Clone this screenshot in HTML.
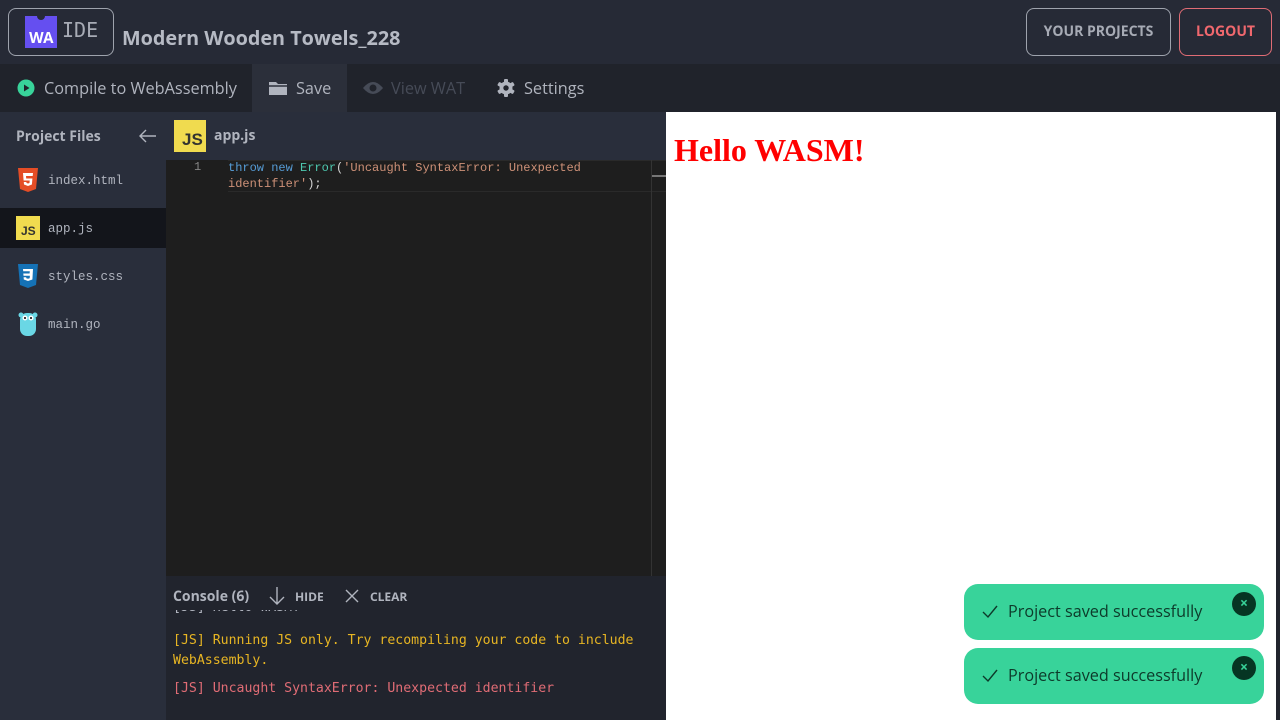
<!DOCTYPE html>
<html><head><meta charset="utf-8"><style>
*{margin:0;padding:0;box-sizing:border-box}
body{width:1280px;height:720px;overflow:hidden;background:#21242d;font-family:"Open Sans","Liberation Sans",sans-serif;position:relative}
.hdr{position:absolute;left:0;top:0;width:1280px;height:64px;background:#262a36}
.logo{position:absolute;left:8px;top:8px;width:106px;height:48px;border:1px solid #9ea3ad;border-radius:8px}
.wa{position:absolute;left:16px;top:7px;width:32px;height:32px;background:#654ff0;color:#fff;font-weight:bold;font-size:15px;line-height:14px;padding-top:15px;text-align:center;letter-spacing:-0.5px}
.wa:before{content:"";position:absolute;left:12px;top:-4px;width:8px;height:8px;border-radius:50%;background:#262a36}
.ide{position:absolute;left:53px;top:9px;color:#a7abb5;font-family:"DejaVu Sans Mono","Liberation Mono",monospace;font-size:20px;letter-spacing:0px}
.title{position:absolute;left:122px;top:24px;color:#b6bac4;font-weight:bold;font-size:19.8px}
.btn{position:absolute;top:8px;height:48px;border-radius:8px;font-weight:bold;font-size:14px;line-height:46px;text-align:center}
.tb{position:absolute;left:0;top:64px;width:1280px;height:48px;background:#20232b}
.ti{position:absolute;top:0;height:48px;line-height:48px;font-size:16.3px;color:#b0b4be}
.side{position:absolute;left:0;top:112px;width:166px;height:608px;background:#292e3b}
.f{position:absolute;left:0;width:166px;height:40px}
.f span{position:absolute;left:48px;top:14px;font-family:"Liberation Mono",monospace;font-size:12.5px;color:#b0b4be}
.ed{position:absolute;left:166px;top:112px;width:500px;height:464px;background:#1e1e1e}
.edh{position:absolute;left:166px;top:112px;width:500px;height:48px;background:#292e3b}
.code{font-family:"Liberation Mono",monospace;font-size:12px;position:absolute}
.con{position:absolute;left:166px;top:576px;width:500px;height:144px;background:#21242d}
.pre{position:absolute;left:666px;top:112px;width:610px;height:608px;background:#fff}
.toast{position:absolute;left:964px;width:300px;height:56px;background:#38d39a;border-radius:14px}
.toast .t{position:absolute;left:44px;top:16px;font-size:16.2px;color:#0d3a2a}
.toast .x{position:absolute;right:8px;top:8px;width:24px;height:24px;border-radius:50%;background:#063523;color:#38d39a;font-size:14px;font-weight:bold;text-align:center;line-height:24px}
</style></head><body>
<div class="hdr">
 <div class="logo"><div class="wa">WA</div><div class="ide">IDE</div></div>
 <div class="title">Modern Wooden Towels_228</div>
 <div class="btn" style="left:1026px;width:145px;border:1px solid #9ea3ad;color:#a7abb5">YOUR PROJECTS</div>
 <div class="btn" style="left:1179px;width:93px;border:1px solid #e06c75;color:#f0686e">LOGOUT</div>
</div>
<div class="tb">
 <div class="ti" style="left:17px"><svg width="18" height="18" viewBox="0 0 18 18" style="vertical-align:-3px;margin-right:9px"><circle cx="9" cy="9" r="8.5" fill="#38d39a"/><path d="M7 5.5v7l5.5-3.5z" fill="#20232b"/></svg>Compile to WebAssembly</div>
 <div class="ti" style="left:252px;width:95px;background:#2b2f3a;padding-left:16px"><svg width="20" height="16" viewBox="0 0 20 16" style="vertical-align:-2px;margin-right:8px"><path d="M1 2h7l2 2h9v11H1z" fill="#b0b4be"/><path d="M1 6h18" stroke="#2b2f3a" stroke-width="1.5"/></svg>Save</div>
 <div class="ti" style="left:363px;color:#464b57"><svg width="20" height="14" viewBox="0 0 20 14" style="vertical-align:-1px;margin-right:8px"><path d="M0 7Q10-5 20 7Q10 19 0 7z" fill="#464b57"/><circle cx="10" cy="7" r="3.5" fill="#20232b"/></svg>View WAT</div>
 <div class="ti" style="left:497px"><svg width="18" height="18" viewBox="0 0 18 18" style="vertical-align:-3px;margin-right:9px"><g fill="#b0b4be"><circle cx="9" cy="9" r="6.5"/><rect x="7" y="0" width="4" height="18" rx="1"/><rect x="7" y="0" width="4" height="18" rx="1" transform="rotate(60 9 9)"/><rect x="7" y="0" width="4" height="18" rx="1" transform="rotate(120 9 9)"/></g><circle cx="9" cy="9" r="2.7" fill="#20232b"/></svg>Settings</div>
</div>
<div class="side">
 <div style="position:absolute;left:16px;top:15px;font-weight:bold;font-size:14px;color:#b0b4be">Project Files</div>
 <svg width="18" height="14" viewBox="0 0 18 14" style="position:absolute;left:139px;top:17px"><path d="M17 7H1M7 1L1 7l6 6" stroke="#b0b4be" stroke-width="1.4" fill="none"/></svg>
 <div class="f" style="top:48px"><svg width="20" height="24" viewBox="0 0 20 24" style="position:absolute;left:18px;top:8px"><path d="M0 0h20l-2 21-8 3-8-3z" fill="#e44d26"/><path d="M5 5h10l-.3 3H8l.2 2.5h6.2l-.5 6L10 18l-4-1.5-.2-2.5h2.6l.1 1 1.5.5 1.5-.5.2-2.5H5.6z" fill="#fff"/></svg><span>index.html</span></div>
 <div class="f" style="top:96px;background:#13151b"><div style="position:absolute;left:16px;top:8px;width:24px;height:24px;background:#f0db4f"><div style="position:absolute;left:5px;top:8px;font-family:'Liberation Sans',sans-serif;font-weight:bold;font-size:12px;color:#323330">JS</div></div><span>app.js</span></div>
 <div class="f" style="top:144px"><svg width="20" height="24" viewBox="0 0 20 24" style="position:absolute;left:18px;top:8px"><path d="M0 0h20l-2 21-8 3-8-3z" fill="#1572b6"/><path d="M5 5h10l-.6 10.5L10 17l-4.2-1.5-.2-2.2h2.6l.1 1 1.7.5 1.7-.5.2-2.5H5.5l-.2-2.3h6.3l.2-2.2H5.2z" fill="#fff"/></svg><span>styles.css</span></div>
 <div class="f" style="top:192px"><svg width="22" height="26" viewBox="0 0 22 26" style="position:absolute;left:17px;top:7px"><circle cx="4" cy="4" r="2.5" fill="#6ad7e5"/><circle cx="18" cy="4" r="2.5" fill="#6ad7e5"/><rect x="3" y="2" width="16" height="23" rx="7" fill="#6ad7e5"/><circle cx="8" cy="7" r="2.5" fill="#fff"/><circle cx="14" cy="7" r="2.5" fill="#fff"/><circle cx="8" cy="7" r="1" fill="#000"/><circle cx="14" cy="7" r="1" fill="#000"/></svg><span>main.go</span></div>
</div>
<div class="ed">
 <div style="position:absolute;left:62px;top:48px;width:438px;height:32px;border-top:1px solid #2a2a2a;border-bottom:1px solid #2a2a2a"></div>
 <div style="position:absolute;left:485px;top:48px;width:1px;height:416px;background:#333"></div>
 <div style="position:absolute;left:486px;top:63px;width:14px;height:2px;background:#777"></div>
</div>
<div class="edh"><div style="position:absolute;left:8px;top:8px;width:32px;height:32px;background:#f0db4f"><div style="position:absolute;left:8px;top:10px;font-family:'Liberation Sans',sans-serif;font-weight:bold;font-size:17px;color:#323330">JS</div></div><div style="position:absolute;left:48px;top:14px;font-weight:bold;font-size:14px;color:#b0b4be">app.js</div></div>
<div class="code" style="left:194px;top:160px;color:#858585">1</div>
<div class="code" style="left:228px;top:160px;line-height:16px;color:#d4d4d4"><span style="color:#569cd6">throw new </span><span style="color:#4ec9b0">Error</span>(<span style="color:#ce9178">'Uncaught SyntaxError: Unexpected<br>identifier'</span>);</div>
<div class="con">
 <div style="position:absolute;left:7px;top:11px;font-weight:bold;font-size:14px;color:#b0b4be">Console (6)</div>
 <svg width="18" height="20" viewBox="0 0 18 20" style="position:absolute;left:102px;top:10px"><path d="M9 1v17M2 11l7 7 7-7" stroke="#b0b4be" stroke-width="1.4" fill="none"/></svg>
 <div style="position:absolute;left:129px;top:12px;font-weight:bold;font-size:12px;color:#b0b4be">HIDE</div>
 <svg width="14" height="14" viewBox="0 0 14 14" style="position:absolute;left:179px;top:13px"><path d="M1 1l12 12M13 1L1 13" stroke="#b0b4be" stroke-width="1.4"/></svg>
 <div style="position:absolute;left:204px;top:12px;font-weight:bold;font-size:12px;color:#b0b4be">CLEAR</div>
 <div style="position:absolute;left:0;top:34px;width:500px;height:110px;overflow:hidden;font-family:'DejaVu Sans Mono','Liberation Mono',monospace;font-size:13.2px;line-height:20px">
  <div style="position:absolute;left:7px;top:-12px;color:#b0b4be">[JS] Hello WASM!</div>
  <div style="position:absolute;left:7px;top:21px;color:#e7b523;width:480px">[JS] Running JS only. Try recompiling your code to include WebAssembly.</div>
  <div style="position:absolute;left:7px;top:69px;color:#e06c75">[JS] Uncaught SyntaxError: Unexpected identifier</div>
 </div>
</div>
<div class="pre"><div style="position:absolute;left:8px;top:20px;font-family:'Liberation Serif',serif;font-weight:bold;font-size:32px;color:#f00">Hello WASM!</div></div>
<div class="toast" style="top:584px"><svg width="16" height="14" viewBox="0 0 16 14" style="position:absolute;left:18px;top:21px"><path d="M1 7l5 5 9-11" stroke="#0d3a2a" stroke-width="1.4" fill="none"/></svg><div class="t">Project saved successfully</div><div class="x">×</div></div>
<div class="toast" style="top:648px"><svg width="16" height="14" viewBox="0 0 16 14" style="position:absolute;left:18px;top:21px"><path d="M1 7l5 5 9-11" stroke="#0d3a2a" stroke-width="1.4" fill="none"/></svg><div class="t">Project saved successfully</div><div class="x">×</div></div>
</body></html>
